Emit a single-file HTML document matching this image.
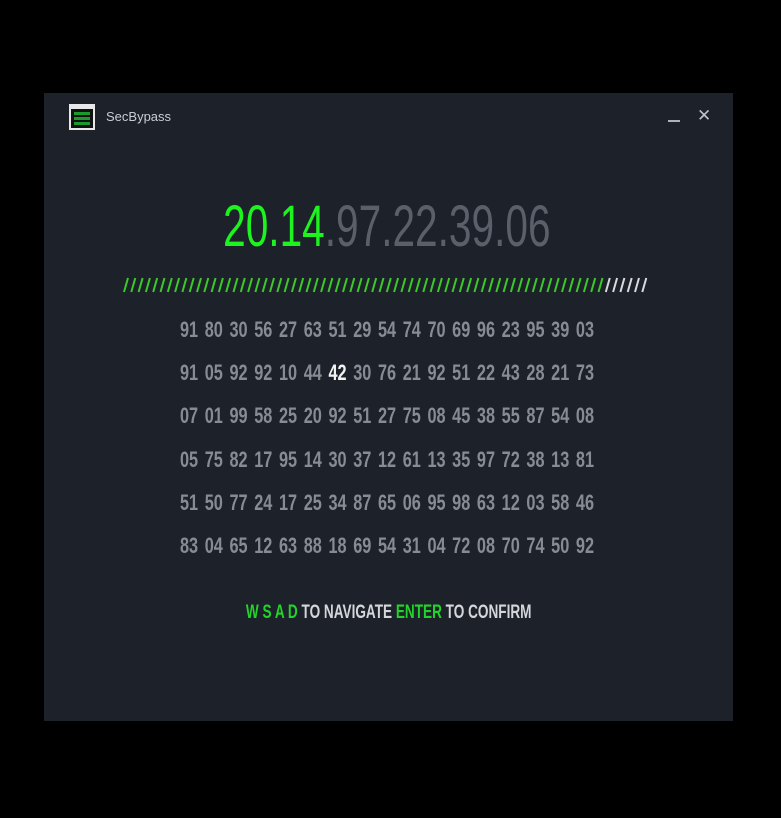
<!DOCTYPE html>
<html><head><meta charset="utf-8"><style>
body{margin:0;width:781px;height:818px;background:#000;position:relative;overflow:hidden;font-family:"Liberation Sans",sans-serif}
.win{position:absolute;left:44px;top:93px;width:689px;height:628px;background:#1d2129}
.abs{position:absolute}
.ip{left:-4px;width:781px;top:198px;text-align:center;font-size:58px;line-height:58px;white-space:nowrap}
.ip span.in{display:inline-block;transform:scaleX(.7);transform-origin:center}
.row{position:absolute;left:180px;white-space:nowrap;font-size:22px;line-height:22px;font-weight:bold;color:#868b94;transform:scaleX(.74);transform-origin:left top}
.row span{display:inline-block;width:33.45px;text-align:left}
.hint{left:-2px;width:781px;top:603px;text-align:center;font-size:19px;line-height:19px;font-weight:bold;color:#d4d6da;white-space:nowrap}
.hint .in{display:inline-block;transform:scaleX(.715)}
.g{color:#22d42a}
</style></head><body>
<div class="win"></div>
<svg class="abs" style="left:69px;top:104px" width="26" height="26" viewBox="0 0 26 26">
<rect x="1" y="1" width="24" height="24" fill="#111" stroke="#e8e8e8" stroke-width="2"/>
<rect x="2" y="2" width="22" height="3" fill="#e8e8e8"/>
<rect x="5" y="8" width="16" height="3" fill="#1a9a2a"/><rect x="5" y="13" width="16" height="3" fill="#1a9a2a"/><rect x="5" y="18" width="16" height="3" fill="#1a9a2a"/>
</svg>
<div class="abs" style="left:106px;top:109px;font-size:13px;color:#c9cdd3">SecBypass</div>
<div class="abs" style="left:668px;top:120px;width:12px;height:2px;background:#aeb2b8"></div>
<div class="abs" style="left:697px;top:106px;font-size:17px;color:#c0c4ca;line-height:20px">✕</div>
<div class="abs ip"><span class="in"><span style="color:#1df31f">20.14</span><span style="color:#5a5f69">.97.22.39.06</span></span></div>
<svg class="abs" style="left:120px;top:276px" width="540" height="20">
<path stroke="#3cc92a" stroke-width="2" d="M4 16l4-14M11.3 16l4-14M18.6 16l4-14M25.9 16l4-14M33.2 16l4-14M40.5 16l4-14M47.8 16l4-14M55.1 16l4-14M62.4 16l4-14M69.7 16l4-14M77 16l4-14M84.3 16l4-14M91.6 16l4-14M98.9 16l4-14M106.2 16l4-14M113.5 16l4-14M120.8 16l4-14M128.1 16l4-14M135.4 16l4-14M142.7 16l4-14M150 16l4-14M157.3 16l4-14M164.6 16l4-14M171.9 16l4-14M179.2 16l4-14M186.5 16l4-14M193.8 16l4-14M201.1 16l4-14M208.4 16l4-14M215.7 16l4-14M223 16l4-14M230.3 16l4-14M237.6 16l4-14M244.9 16l4-14M252.2 16l4-14M259.5 16l4-14M266.8 16l4-14M274.1 16l4-14M281.4 16l4-14M288.7 16l4-14M296 16l4-14M303.3 16l4-14M310.6 16l4-14M317.9 16l4-14M325.2 16l4-14M332.5 16l4-14M339.8 16l4-14M347.1 16l4-14M354.4 16l4-14M361.7 16l4-14M369 16l4-14M376.3 16l4-14M383.6 16l4-14M390.9 16l4-14M398.2 16l4-14M405.5 16l4-14M412.8 16l4-14M420.1 16l4-14M427.4 16l4-14M434.7 16l4-14M442 16l4-14M449.3 16l4-14M456.6 16l4-14M463.9 16l4-14M471.2 16l4-14M478.5 16l4-14"/>
<path stroke="#d8dadd" stroke-width="2" d="M485.8 16l4-14M493.1 16l4-14M500.4 16l4-14M507.7 16l4-14M515 16l4-14M522.3 16l4-14"/>
</svg>
<div class="row" style="top:319px"><span>91</span><span>80</span><span>30</span><span>56</span><span>27</span><span>63</span><span>51</span><span>29</span><span>54</span><span>74</span><span>70</span><span>69</span><span>96</span><span>23</span><span>95</span><span>39</span><span>03</span></div>
<div class="row" style="top:362px"><span>91</span><span>05</span><span>92</span><span>92</span><span>10</span><span>44</span><span style="color:#f2f2f2">42</span><span>30</span><span>76</span><span>21</span><span>92</span><span>51</span><span>22</span><span>43</span><span>28</span><span>21</span><span>73</span></div>
<div class="row" style="top:405px"><span>07</span><span>01</span><span>99</span><span>58</span><span>25</span><span>20</span><span>92</span><span>51</span><span>27</span><span>75</span><span>08</span><span>45</span><span>38</span><span>55</span><span>87</span><span>54</span><span>08</span></div>
<div class="row" style="top:449px"><span>05</span><span>75</span><span>82</span><span>17</span><span>95</span><span>14</span><span>30</span><span>37</span><span>12</span><span>61</span><span>13</span><span>35</span><span>97</span><span>72</span><span>38</span><span>13</span><span>81</span></div>
<div class="row" style="top:492px"><span>51</span><span>50</span><span>77</span><span>24</span><span>17</span><span>25</span><span>34</span><span>87</span><span>65</span><span>06</span><span>95</span><span>98</span><span>63</span><span>12</span><span>03</span><span>58</span><span>46</span></div>
<div class="row" style="top:535px"><span>83</span><span>04</span><span>65</span><span>12</span><span>63</span><span>88</span><span>18</span><span>69</span><span>54</span><span>31</span><span>04</span><span>72</span><span>08</span><span>70</span><span>74</span><span>50</span><span>92</span></div>
<div class="abs hint"><span class="in"><span class="g">W S A D</span> TO NAVIGATE <span class="g">ENTER</span> TO CONFIRM</span></div>
</body></html>
